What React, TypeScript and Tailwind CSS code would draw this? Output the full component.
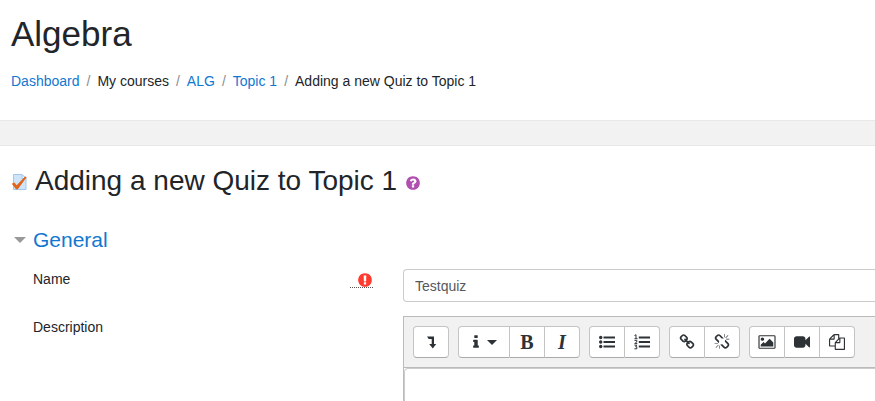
import type { ReactNode } from "react";

const paths = {
  help: "M1024 1376v-192q0-14-9-23t-23-9h-192q-14 0-23 9t-9 23v192q0 14 9 23t23 9h192q14 0 23-9t9-23zm256-672q0-88-55.5-163t-138.5-116-170-41q-243 0-371 213-15 24 8 42l132 100q7 6 19 6 16 0 25-12 53-68 86-92 34-24 86-24 48 0 85.5 26t37.5 59q0 38-20 61t-68 45q-63 28-115.5 86.5t-52.5 125.5v36q0 14 9 23t23 9h192q14 0 23-9t9-23q0-19 21.5-49.5t54.5-49.5q32-18 49-28.5t46-35 44.5-48 28-60.5 12.5-81zm384 192q0 209-103 385.5t-279.5 279.5-385.5 103-385.5-103-279.5-279.5-103-385.5 103-385.5 279.5-279.5 385.5-103 385.5 103 279.5 279.5 103 385.5z",
  required:
    "M896 128q209 0 385.5 103t279.5 279.5 103 385.5-103 385.5-279.5 279.5-385.5 103-385.5-103-279.5-279.5-103-385.5 103-385.5 279.5-279.5 385.5-103zm128 1247v-190q0-14-9-23.5t-22-9.5h-192q-13 0-23 10t-10 23v190q0 13 10 23t23 10h192q13 0 22-9.5t9-23.5zm-2-344l18-621q0-12-10-18-10-8-24-8h-220q-14 0-24 8-10 6-10 18l17 621q0 10 10 17.5t24 7.5h185q14 0 23.5-7.5t10.5-17.5z",
  info: "M1216 1344v128q0 26-19 45t-45 19h-512q-26 0-45-19t-19-45v-128q0-26 19-45t45-19h64v-384h-64q-26 0-45-19t-19-45v-128q0-26 19-45t45-19h384q26 0 45 19t19 45v576h64q26 0 45 19t19 45zm-128-1152v192q0 26-19 45t-45 19h-256q-26 0-45-19t-19-45v-192q0-26 19-45t45-19h256q26 0 45 19t19 45z",
  link: "M1520 1216q0-40-28-68l-208-208q-28-28-68-28-42 0-72 32 3 3 19 18.5t21.5 21.5 15 19 13 25.5 3.5 27.5q0 40-28 68t-68 28q-15 0-27.5-3.5t-25.5-13-19-15-21.5-21.5-18.5-19q-33 31-33 73 0 40 28 68l206 207q27 27 68 27 40 0 68-26l147-146q28-28 28-67zm-703-705q0-40-28-68l-206-207q-28-28-68-28-39 0-68 27l-147 146q-28 28-28 67 0 40 28 68l208 208q27 27 68 27 42 0 72-31-3-3-19-18.5t-21.5-21.5-15-19-13-25.5-3.5-27.5q0-40 28-68t68-28q15 0 27.5 3.5t25.5 13 19 15 21.5 21.5 18.5 19q33-31 33-73zm895 705q0 120-85 203l-147 146q-83 83-203 83-121 0-204-85l-206-207q-83-83-83-203 0-123 88-209l-88-88q-86 88-208 88-120 0-204-84l-208-208q-84-84-84-204t85-203l147-146q83-83 203-83 121 0 204 85l206 207q83 83 83 203 0 123-88 209l88 88q86-88 208-88 120 0 204 84l208 208q84 84 84 204z",
  unlink:
    "M503 1271l-256 256q-10 9-23 9-12 0-23-9-9-10-9-23t9-23l256-256q10-9 23-9t23 9q9 10 9 23t-9 23zm169 41v320q0 14-9 23t-23 9-23-9-9-23v-320q0-14 9-23t23-9 23 9 9 23zm-224-224q0 14-9 23t-23 9h-320q-14 0-23-9t-9-23 9-23 23-9h320q14 0 23 9t9 23zm1264 128q0 120-85 203l-147 146q-83 83-203 83-121 0-204-85l-334-335q-21-21-42-56l239-18 273 274q28 28 68 27.5t68-27.5l147-146q28-28 28-67 0-40-28-68l-274-275 18-239q35 21 56 42l336 336q84 86 84 204zm-617-724l-239 18-273-274q-28-28-68-28-39 0-68 27l-147 146q-28 28-28 67 0 40 28 68l274 274-18 240q-35-21-56-42l-336-336q-84-86-84-204 0-120 85-203l147-146q83-83 203-83 121 0 204 85l334 335q21 21 42 56zm633 84q0 14-9 23t-23 9h-320q-14 0-23-9t-9-23 9-23 23-9h320q14 0 23 9t9 23zm-544-544v320q0 14-9 23t-23 9-23-9-9-23v-320q0-14 9-23t23-9 23 9 9 23zm407 151l-256 256q-11 9-23 9t-23-9q-9-10-9-23t9-23l256-256q10-9 23-9t23 9q9 10 9 23t-9 23z",
  image:
    "M576 576q0 80-56 136t-136 56-136-56-56-136 56-136 136-56 136 56 56 136zm1024 384v448h-1408v-192l320-320 160 160 512-512zm96-704h-1600q-13 0-22.5 9.5t-9.5 22.5v1216q0 13 9.5 22.5t22.5 9.5h1600q13 0 22.5-9.5t9.5-22.5v-1216q0-13-9.5-22.5t-22.5-9.5zm160 32v1216q0 66-47 113t-113 47h-1600q-66 0-113-47t-47-113v-1216q0-66 47-113t113-47h1600q66 0 113 47t47 113z",
  video:
    "M1792 352v1088q0 42-39 59-13 5-25 5-27 0-45-19l-403-403v166q0 119-84.5 203.5t-203.5 84.5h-704q-119 0-203.5-84.5t-84.5-203.5v-704q0-119 84.5-203.5t203.5-84.5h704q119 0 203.5 84.5t84.5 203.5v165l403-402q18-19 45-19 12 0 25 5 39 17 39 59z",
  files:
    "M1696 384q40 0 68 28t28 68v1216q0 40-28 68t-68 28h-960q-40 0-68-28t-28-68v-288h-544q-40 0-68-28t-28-68v-672q0-40 20-88t48-76l408-408q28-28 76-48t88-20h416q40 0 68 28t28 68v328q68-40 128-40h416zm-544 213l-299 299h299v-299zm-640-384l-299 299h299v-299zm196 647l316-316v-416h-384v416q0 40-28 68t-68 28h-416v640h512v-256q0-40 20-88t48-76zm956 804v-1152h-384v416q0 40-28 68t-68 28h-416v640h896z",
};

const viewBoxes: Partial<Record<keyof typeof paths, string>> = {
  image: "-64 0 1920 1792",
  info: "448 0 896 1792",
};

function Icon({ name, className = "size-4" }: { name: keyof typeof paths; className?: string }) {
  return (
    <svg
      className={`${className} shrink-0`}
      viewBox={viewBoxes[name] ?? "0 0 1792 1792"}
      fill="currentColor"
      aria-hidden="true"
    >
      <path d={paths[name]} />
    </svg>
  );
}

function QuizIcon() {
  return (
    <svg className="size-4 shrink-0" viewBox="0 0 16 16" aria-hidden="true">
      <path d="M2.500.500h8.500l4 4v11H2.500z" fill="#cde4f9" stroke="#a3c8f0" />
      <path d="M11 .500v4h4z" fill="#f1f8ff" stroke="#a3c8f0" />
      <path d="M.8 9.800 3.400 8.400l2.300 2.900L14 2.600l1.800.4L6.800 15.200H5z" fill="#e0641c" />
    </svg>
  );
}

function Tool({ label, wide, children }: { label: string; wide?: boolean; children: ReactNode }) {
  return (
    <button
      type="button"
      aria-label={label}
      className={`flex h-8 items-center justify-center border border-l-0 border-[#c4c4c4] border-b-[#aaa] bg-white first:rounded-l first:border-l last:rounded-r ${
        wide ? "w-13 gap-[7px]" : "w-[35px] first:w-9"
      }`}
    >
      {children}
    </button>
  );
}

function Crumb({ href, children }: { href?: string; children: ReactNode }) {
  return (
    <li className="group flex">
      <span className="px-[7px] text-[#868e96] group-first:hidden">/</span>
      {href ? (
        <a href={href} className="text-[#1177d1]">
          {children}
        </a>
      ) : (
        <span>{children}</span>
      )}
    </li>
  );
}

export default function App() {
  return (
    <div className="overflow-hidden bg-white font-['Liberation_Sans',Arial,sans-serif] text-sm text-[#212529]">
      <header className="px-[11px] pt-3 pb-[29px]">
        <h1 className="text-[35px] leading-[43px]">Algebra</h1>
        <nav aria-label="Breadcrumb" className="mt-4">
          <ol className="flex">
            <Crumb href="#dashboard">Dashboard</Crumb>
            <Crumb>My courses</Crumb>
            <Crumb href="#alg">ALG</Crumb>
            <Crumb href="#topic">Topic 1</Crumb>
            <Crumb>Adding a new Quiz to Topic 1</Crumb>
          </ol>
        </nav>
      </header>
      <div className="h-[26px] border-y border-[#e8e8e8] bg-[#f2f2f2]" />
      <main className="pt-[18px]">
        <h2 className="flex items-center gap-2 pl-[11px] text-[28px] leading-[34px]">
          <span className="pt-[2px]">
            <QuizIcon />
          </span>
          Adding a new Quiz to Topic 1
          <button type="button" aria-label="Help with Quiz" className="pt-1 text-[#b04fb0]">
            <Icon name="help" />
          </button>
        </h2>
        <form>
          <h3 className="mt-7 pl-[14px] text-[21px] leading-7">
            <button type="button" aria-expanded="true" className="flex items-center gap-[7px] text-[#1177d1]">
              <svg className="h-[6px] w-3" viewBox="0 0 12 6" aria-hidden="true">
                <path d="M0 0h12L6 6z" fill="#999" />
              </svg>
              General
            </button>
          </h3>
          <div className="mt-[15px] flex">
            <div className="flex w-[403px] shrink-0 items-start justify-between pr-[30px] pl-[33px]">
              <label htmlFor="name">Name</label>
              <span
                title="Required"
                className="mt-[3px] flex h-4 w-[23px] justify-end border-b border-dotted border-[#555] text-[#ff3b30]"
              >
                <Icon name="required" />
              </span>
            </div>
            <input
              id="name"
              type="text"
              defaultValue="Testquiz"
              className="h-[33px] min-w-0 grow rounded-l border border-r-0 border-[#ccc] bg-white px-[11px] text-[#55595c]"
            />
          </div>
          <div className="mt-[14px] flex">
            <div className="w-[403px] shrink-0 pt-px pl-[33px]">
              <label htmlFor="description">Description</label>
            </div>
            <div className="min-w-0 grow border-t border-l border-[#bbb]">
              <div
                role="toolbar"
                aria-label="Formatting"
                className="flex h-[51px] gap-[9px] overflow-hidden border-b border-[#bbb] bg-[#f1f1f1] p-[9px] text-[#2d3236]"
              >
                <div className="flex">
                  <Tool label="Show more buttons">
                    <svg className="size-4" viewBox="0 0 16 16" aria-hidden="true">
                      <path d="M4 2.600h7V10h2.200L9.800 14.600 6.200 10h2.500V5H5.700z" fill="currentColor" />
                    </svg>
                  </Tool>
                </div>
                <div className="flex">
                  <Tool label="Paragraph styles" wide>
                    <Icon name="info" className="h-4 w-2" />
                    <svg className="h-[5px] w-[10px]" viewBox="0 0 10 5" aria-hidden="true">
                      <path d="M0 0h10L5 5z" fill="currentColor" />
                    </svg>
                  </Tool>
                  <Tool label="Bold">
                    <span className="font-['Liberation_Serif',serif] text-xl font-bold">B</span>
                  </Tool>
                  <Tool label="Italic">
                    <span className="font-['Liberation_Serif',serif] text-xl font-bold italic">I</span>
                  </Tool>
                </div>
                <div className="flex">
                  <Tool label="Unordered list">
                    <svg className="size-4" viewBox="0 0 16 16" fill="currentColor" aria-hidden="true">
                      <circle cx="1.700" cy="3.500" r="1.700" />
                      <circle cx="1.700" cy="8" r="1.700" />
                      <circle cx="1.700" cy="12.500" r="1.700" />
                      <path d="M4.500 2.400H16v2.200H4.500zM4.500 6.900H16v2.200H4.500zM4.500 11.400H16v2.200H4.500z" />
                    </svg>
                  </Tool>
                  <Tool label="Ordered list">
                    <svg className="size-4" viewBox="0 0 16 16" fill="currentColor" aria-hidden="true">
                      <path d="M4.800 2.400H16v2.200H4.800zM4.800 6.900H16v2.200H4.800zM4.800 11.400H16v2.200H4.800z" />
                      <path
                        d="M.5 1.500 2 .7V4.500M.5 4.700h3M.5 6.400h2.300v1.500L.7 9.600h2.600M.5 11.200h2.300L1.700 12.800h1.100v2H.4"
                        fill="none"
                        stroke="currentColor"
                      />
                    </svg>
                  </Tool>
                </div>
                <div className="flex">
                  <Tool label="Link">
                    <Icon name="link" />
                  </Tool>
                  <Tool label="Unlink">
                    <Icon name="unlink" />
                  </Tool>
                </div>
                <div className="flex">
                  <Tool label="Insert image">
                    <Icon name="image" className="h-4 w-[18px]" />
                  </Tool>
                  <Tool label="Insert media">
                    <Icon name="video" />
                  </Tool>
                  <Tool label="Manage files">
                    <Icon name="files" />
                  </Tool>
                </div>
              </div>
              <textarea
                id="description"
                rows={1}
                className="block w-full resize-none rounded-tl border-t border-l border-[#ccc] bg-white p-[6px]"
              />
            </div>
          </div>
        </form>
      </main>
    </div>
  );
}
